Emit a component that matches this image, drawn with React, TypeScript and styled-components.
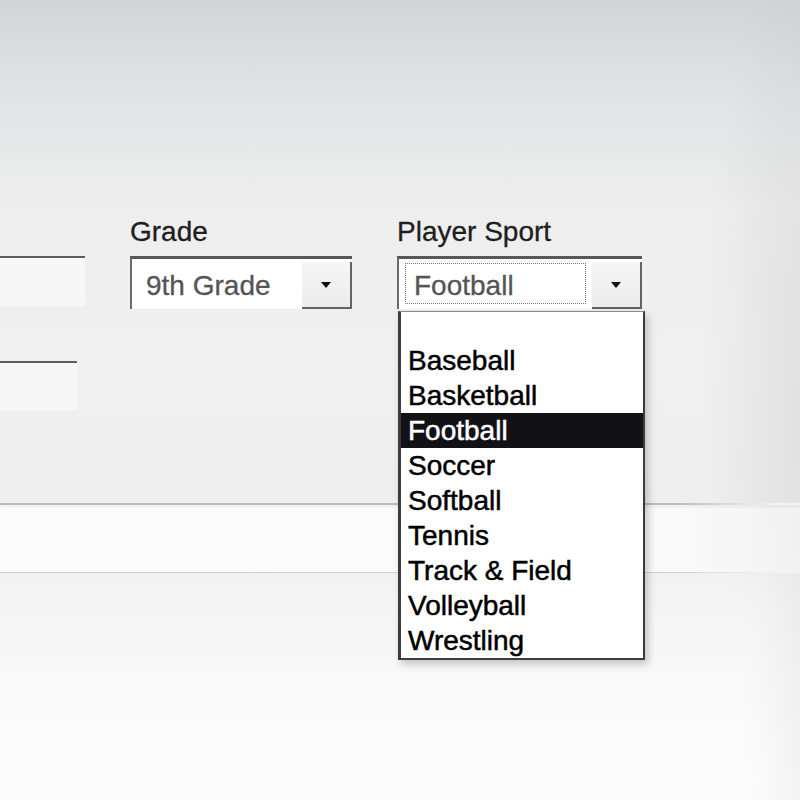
import styled, { createGlobalStyle } from "styled-components";

const GlobalStyle = createGlobalStyle`
  html, body {
    margin: 0;
    padding: 0;
  }
  body {
    font-family: "Liberation Sans", Arial, sans-serif;
  }
`;

const sports = [
  "Baseball",
  "Basketball",
  "Football",
  "Soccer",
  "Softball",
  "Tennis",
  "Track & Field",
  "Volleyball",
  "Wrestling",
];

const Page = styled.div`
  width: 800px;
  height: 800px;
  overflow: hidden;
  display: flex;
  flex-direction: column;
  background:
    radial-gradient(ellipse 120px 500px at 820px 400px, rgba(0, 0, 0, 0.07), transparent),
    linear-gradient(180deg, #d2d5d6 0%, #e4e5e6 14%, #eeeeee 26%, #f0f0f0 45%, #efefef 62%);
`;

const FormArea = styled.div`
  height: 503px;
  padding-top: 215px;
  box-sizing: border-box;
  display: flex;
  align-items: flex-start;
`;

const LeftColumn = styled.div`
  width: 85px;
  margin-top: 41px;
  display: flex;
  flex-direction: column;
  gap: 55px;
`;

const TextBox = styled.div<{ w: number; h: number }>`
  width: ${({ w }) => w}px;
  height: ${({ h }) => h}px;
  box-sizing: border-box;
  border-top: 2px solid #5c5c5c;
  background: #f7f7f7;
`;

const Field = styled.div<{ w: number; ml: number }>`
  width: ${({ w }) => w}px;
  margin-left: ${({ ml }) => ml}px;
  position: relative;
`;

const Label = styled.div`
  font-size: 28px;
  line-height: 34px;
  height: 34px;
  color: #1e1e1e;
  margin-bottom: 7px;
  -webkit-text-stroke: 0.3px #1e1e1e;
`;

const Select = styled.div`
  height: 53px;
  box-sizing: border-box;
  display: flex;
  border-top: 3px solid #585858;
  border-left: 2px solid #6a6a6a;
  background: #ffffff;
`;

const SelectValue = styled.div`
  flex: 1;
  display: flex;
  align-items: center;
  padding: 4px 6px 5px;
`;

const ValueText = styled.div<{ focused?: boolean }>`
  flex: 1;
  height: 41px;
  display: flex;
  align-items: center;
  box-sizing: border-box;
  padding: 5px 0 0 ${({ focused }) => (focused ? 8 : 7)}px;
  font-size: 28px;
  color: #555555;
  -webkit-text-stroke: 0.3px #555555;
  border: 1px dotted ${({ focused }) => (focused ? "#777777" : "transparent")};
`;

const ArrowButton = styled.div`
  width: 48px;
  margin-top: 3px;
  display: flex;
  align-items: center;
  justify-content: center;
  background: linear-gradient(180deg, #f6f6f6, #ececec);
  border-right: 2px solid #646464;
  border-bottom: 2px solid #646464;
`;

const Arrow = styled.span`
  width: 0;
  height: 0;
  border-left: 5px solid transparent;
  border-right: 5px solid transparent;
  border-top: 6px solid #111111;
`;

const DropList = styled.div`
  position: absolute;
  left: 1px;
  top: 96px;
  width: 247px;
  box-sizing: border-box;
  background: #ffffff;
  border: 2px solid #3c3c3c;
  border-top: 1px solid #8a8a8a;
  border-left-width: 3px;
  box-shadow: 3px 4px 8px rgba(0, 0, 0, 0.22);
  padding-top: 31px;
  z-index: 2;
`;

const Option = styled.div<{ selected?: boolean }>`
  height: 35px;
  line-height: 35px;
  padding-left: 7px;
  font-size: 28px;
  color: ${({ selected }) => (selected ? "#ffffff" : "#000000")};
  -webkit-text-stroke: 0.5px ${({ selected }) => (selected ? "#ffffff" : "#000000")};
  background: ${({ selected }) => (selected ? "#111116" : "transparent")};
  white-space: nowrap;
`;

const Band = styled.div`
  height: 70px;
  box-sizing: border-box;
  position: relative;
  background: linear-gradient(90deg, #fcfcfc 0%, #fbfbfb 75%, rgba(250, 250, 250, 0.6) 100%);
  &::before,
  &::after {
    content: "";
    position: absolute;
    left: 0;
    right: 0;
    height: 2px;
    background: linear-gradient(90deg, #b9b9b9 0%, #bdbdbd 85%, transparent 97%);
  }
  &::before {
    top: 0;
    box-shadow: 0 2px 3px rgba(0, 0, 0, 0.08);
  }
  &::after {
    bottom: 0;
    height: 1px;
    background: linear-gradient(90deg, #cfcfcf 0%, #d0d0d0 85%, transparent 97%);
  }
`;

const Lower = styled.div`
  flex: 1;
  background: linear-gradient(180deg, #f3f3f3 0%, #f8f8f8 40%, #fdfdfd 100%);
  box-shadow: inset -40px 0 60px -30px rgba(0, 0, 0, 0.06);
`;

export default function App() {
  return (
    <>
      <GlobalStyle />
      <Page>
        <FormArea>
          <LeftColumn>
            <TextBox w={85} h={50} />
            <TextBox w={77} h={49} />
          </LeftColumn>

          <Field w={222} ml={45}>
            <Label>Grade</Label>
            <Select>
              <SelectValue>
                <ValueText>9th Grade</ValueText>
              </SelectValue>
              <ArrowButton>
                <Arrow />
              </ArrowButton>
            </Select>
          </Field>

          <Field w={245} ml={45}>
            <Label>Player Sport</Label>
            <Select>
              <SelectValue>
                <ValueText focused>Football</ValueText>
              </SelectValue>
              <ArrowButton>
                <Arrow />
              </ArrowButton>
            </Select>
            <DropList>
              {sports.map((s) => (
                <Option key={s} selected={s === "Football"}>
                  {s}
                </Option>
              ))}
            </DropList>
          </Field>
        </FormArea>
        <Band />
        <Lower />
      </Page>
    </>
  );
}
